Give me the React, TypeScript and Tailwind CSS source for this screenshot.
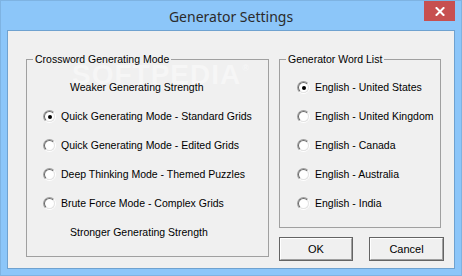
import React from 'react';

const FONT = { fontFamily: 'Tahoma, "Liberation Sans", Arial, sans-serif' };

const modes = [
    'Quick Generating Mode - Standard Grids',
    'Quick Generating Mode - Edited Grids',
    'Deep Thinking Mode - Themed Puzzles',
    'Brute Force Mode - Complex Grids',
];

const lists = [
    'English - United States',
    'English - United Kingdom',
    'English - Canada',
    'English - Australia',
    'English - India',
];

function Radio({ checked }: { checked?: boolean }) {
    return (
        <span className="flex w-[13px] h-[13px] shrink-0 rounded-full border border-t-[#a0a0a0] border-l-[#a0a0a0] border-r-white border-b-white">
            <span className="flex flex-1 items-center justify-center rounded-full border border-t-[#696969] border-l-[#696969] border-r-[#e3e3e3] border-b-[#e3e3e3] bg-white">
                {checked && <span className="w-[4px] h-[4px] rounded-full bg-black" />}
            </span>
        </span>
    );
}

function Option({ label, checked, indent }: { label: string; checked?: boolean; indent: string }) {
    return (
        <div className={`flex h-[29px] items-center gap-[5px] ${indent}`}>
            <Radio checked={checked} />
            <span>{label}</span>
        </div>
    );
}

function Button({ label }: { label: string }) {
    return (
        <button type="button" className="flex w-full h-[24px] border border-[#646464] bg-[#f0f0f0]">
            <span className="flex flex-1 items-center justify-center border border-t-white border-l-white border-r-[#a0a0a0] border-b-[#a0a0a0] text-[11px] text-black">
                {label}
            </span>
        </button>
    );
}

export default function App() {
    return (
        <div className="relative w-[462px] h-[276px] flex flex-col bg-[#8cc6f9] border border-[#7eb3e2] overflow-hidden" style={FONT}>
            {/* title bar */}
            <div className="relative h-[29px] shrink-0 flex items-center justify-center">
                <span className="text-[14px] text-[#2b2b2b] pt-[1px]" style={{ fontFamily: '"Noto Sans", "Open Sans", sans-serif' }}>
                    Generator Settings
                </span>
                <div className="absolute right-[6px] top-0 w-[31px] h-[20px] bg-[#c75050] flex items-center justify-center">
                    <svg width="10" height="9" viewBox="0 0 10 9">
                        <path d="M1.5 1 L8.5 8 M8.5 1 L1.5 8" stroke="white" strokeWidth="2" strokeLinecap="square" />
                    </svg>
                </div>
            </div>

            {/* client area */}
            <div className="relative ml-[6px] mr-[6px] h-[239px] bg-[#f0f0f0] border border-[#6fa2d0] text-[10.5px] text-black">
                {/* watermark */}
                <div aria-hidden className="absolute left-[64px] top-[30px] flex items-start text-[28px] leading-[28px] font-bold tracking-[1px] text-white opacity-40 pointer-events-none select-none">
                    SOFTPEDIA<span className="text-[9px] leading-[9px] mt-[3px] ml-[1px]">®</span>
                </div>

                <div className="relative flex pl-[18px] pt-[21px] gap-[10px]">
                    <fieldset className="w-[243px] h-[205px] border border-[#a0a0a0]">
                        <legend className="ml-[6px] px-[2px] leading-[14px]">Crossword Generating Mode</legend>
                        <div className="pt-[7px]">
                            <div className="flex h-[29px] items-center pl-[43px]">Weaker Generating Strength</div>
                            {modes.map((m, i) => (
                                <Option key={m} label={m} checked={i === 0} indent="pl-[16px]" />
                            ))}
                            <div className="flex h-[29px] items-center pl-[43px]">Stronger Generating Strength</div>
                        </div>
                    </fieldset>

                    <div className="flex flex-col w-[165px]">
                        <fieldset className="w-[162px] h-[176px] border border-[#a0a0a0]">
                            <legend className="ml-[6px] px-[2px] leading-[14px]">Generator Word List</legend>
                            <div className="pt-[7px]">
                                {lists.map((l, i) => (
                                    <Option key={l} label={l} checked={i === 0} indent="pl-[17px]" />
                                ))}
                            </div>
                        </fieldset>
                        <div className="flex mt-[9px] gap-[16px]">
                            <div className="w-[75px]"><Button label="OK" /></div>
                            <div className="w-[76px]"><Button label="Cancel" /></div>
                        </div>
                    </div>
                </div>
            </div>
        </div>
    );
}
